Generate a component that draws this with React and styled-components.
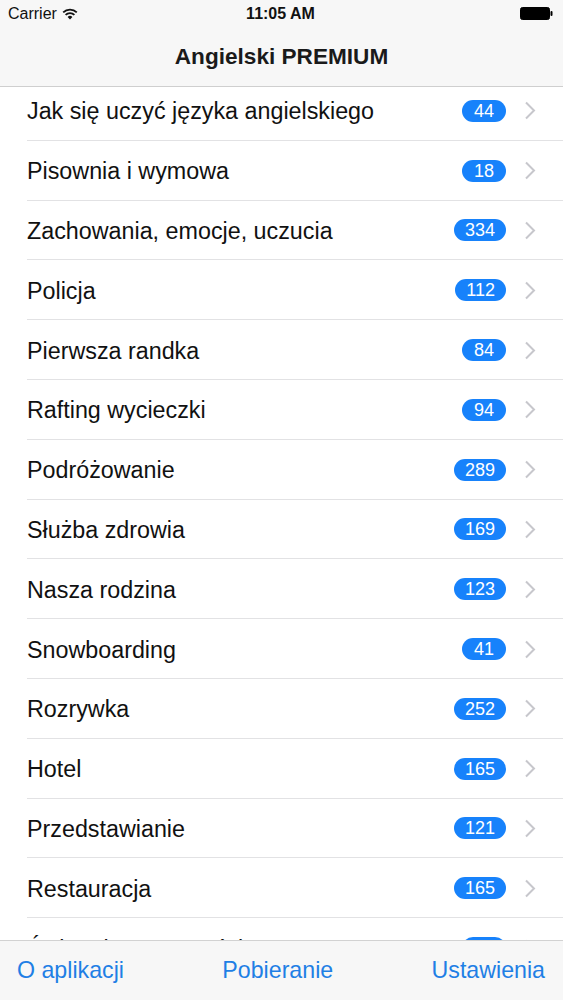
import React from "react";
import styled, { createGlobalStyle } from "styled-components";

const Global = createGlobalStyle`
  html, body { margin: 0; padding: 0; background: #fff; }
  body { font-family: "Liberation Sans", Arial, sans-serif; -webkit-font-smoothing: antialiased; }
  * { box-sizing: border-box; }
`;

const Page = styled.div`
  width: 563px;
  height: 1000px;
  display: flex;
  flex-direction: column;
  overflow: hidden;
  background: #fff;
`;

const Viewport = styled.div`
  position: relative;
  flex: 1;
  overflow: hidden;
`;

const Header = styled.header`
  position: absolute;
  top: 0;
  left: 0;
  right: 0;
  z-index: 2;
  background: rgba(247, 247, 247, 0.98);
  border-bottom: 1px solid #cfcfcf;
  display: flex;
  flex-direction: column;
`;

const StatusBar = styled.div`
  height: 27px;
  display: grid;
  grid-template-columns: 1fr auto 1fr;
  align-items: center;
  padding: 0 10px 0 8px;
  font-size: 16px;
  color: #111;
`;

const StatusLeft = styled.div`
  display: flex;
  align-items: center;
  gap: 5px;
`;

const StatusTime = styled.div`
  font-weight: 700;
  font-size: 16px;
`;

const StatusRight = styled.div`
  display: flex;
  justify-content: flex-end;
`;

const NavBar = styled.div`
  height: 59px;
  display: flex;
  align-items: center;
  justify-content: center;
`;

const Title = styled.h1`
  margin: 0;
  font-size: 22.6px;
  font-weight: 700;
  color: #1a1a1a;
`;

const List = styled.ul`
  list-style: none;
  margin: 0;
  padding: 81px 0 0 0;
`;

const Row = styled.li`
  height: 59.8px;
  padding-left: 27px;
`;

const RowInner = styled.div`
  height: 100%;
  display: flex;
  align-items: center;
  padding: 1px 27px 0 0;
  border-bottom: 1px solid #e2e2e4;
`;

const Label = styled.span`
  flex: 1;
  font-size: 23.3px;
  color: #111;
  white-space: nowrap;
  padding-top: 2px;
`;

const Badge = styled.span`
  height: 22px;
  min-width: 44px;
  padding: 0 11px;
  border-radius: 11px;
  background: #1782fb;
  color: #fff;
  font-size: 18px;
  line-height: 22px;
  text-align: center;
`;

const ChevronBox = styled.span`
  margin-left: 18px;
  display: flex;
  align-items: center;
`;

const Toolbar = styled.nav`
  flex: 0 0 60px;
  background: #f7f7f7;
  border-top: 1px solid #d2d2d2;
  display: flex;
  align-items: center;
  justify-content: space-between;
  padding: 0 18px 0 17px;
`;

const ToolButton = styled.span`
  font-size: 23.2px;
  color: #1f7fe5;
`;

const Wifi = () => (
  <svg width="16" height="12" viewBox="0 0 16 12">
    <path d="M8 11.5 L5.6 8.9 A3.4 3.4 0 0 1 10.4 8.9 Z" fill="#111" />
    <path d="M3.6 6.9 A6.2 6.2 0 0 1 12.4 6.9" stroke="#111" strokeWidth="1.8" fill="none" />
    <path d="M1.2 4.4 A9.6 9.6 0 0 1 14.8 4.4" stroke="#111" strokeWidth="1.8" fill="none" />
  </svg>
);

const Battery = () => (
  <svg width="33" height="13" viewBox="0 0 33 13">
    <rect x="0.5" y="0.5" width="29" height="12" rx="2" fill="#000" stroke="#000" />
    <rect x="30.5" y="4" width="2" height="5" rx="1" fill="#000" />
  </svg>
);

const Chevron = () => (
  <svg width="12" height="19" viewBox="0 0 12 19">
    <path d="M2 1.5 L10 9.5 L2 17.5" stroke="#c7c7cc" strokeWidth="2" fill="none" />
  </svg>
);

const items = [
  ["Jak się uczyć języka angielskiego", 44],
  ["Pisownia i wymowa", 18],
  ["Zachowania, emocje, uczucia", 334],
  ["Policja", 112],
  ["Pierwsza randka", 84],
  ["Rafting wycieczki", 94],
  ["Podróżowanie", 289],
  ["Służba zdrowia", 169],
  ["Nasza rodzina", 123],
  ["Snowboarding", 41],
  ["Rozrywka", 252],
  ["Hotel", 165],
  ["Przedstawianie", 121],
  ["Restauracja", 165],
  ["Święta i uroczystości", 56],
];

export default function App() {
  return (
    <>
      <Global />
      <Page>
        <Viewport>
          <Header>
            <StatusBar>
              <StatusLeft>
                <span>Carrier</span>
                <Wifi />
              </StatusLeft>
              <StatusTime>11:05 AM</StatusTime>
              <StatusRight>
                <Battery />
              </StatusRight>
            </StatusBar>
            <NavBar>
              <Title>Angielski PREMIUM</Title>
            </NavBar>
          </Header>
          <List>
            {items.map(([name, count]) => (
              <Row key={name}>
                <RowInner>
                  <Label>{name}</Label>
                  <Badge>{count}</Badge>
                  <ChevronBox>
                    <Chevron />
                  </ChevronBox>
                </RowInner>
              </Row>
            ))}
          </List>
        </Viewport>
        <Toolbar>
          <ToolButton>O aplikacji</ToolButton>
          <ToolButton>Pobieranie</ToolButton>
          <ToolButton>Ustawienia</ToolButton>
        </Toolbar>
      </Page>
    </>
  );
}
